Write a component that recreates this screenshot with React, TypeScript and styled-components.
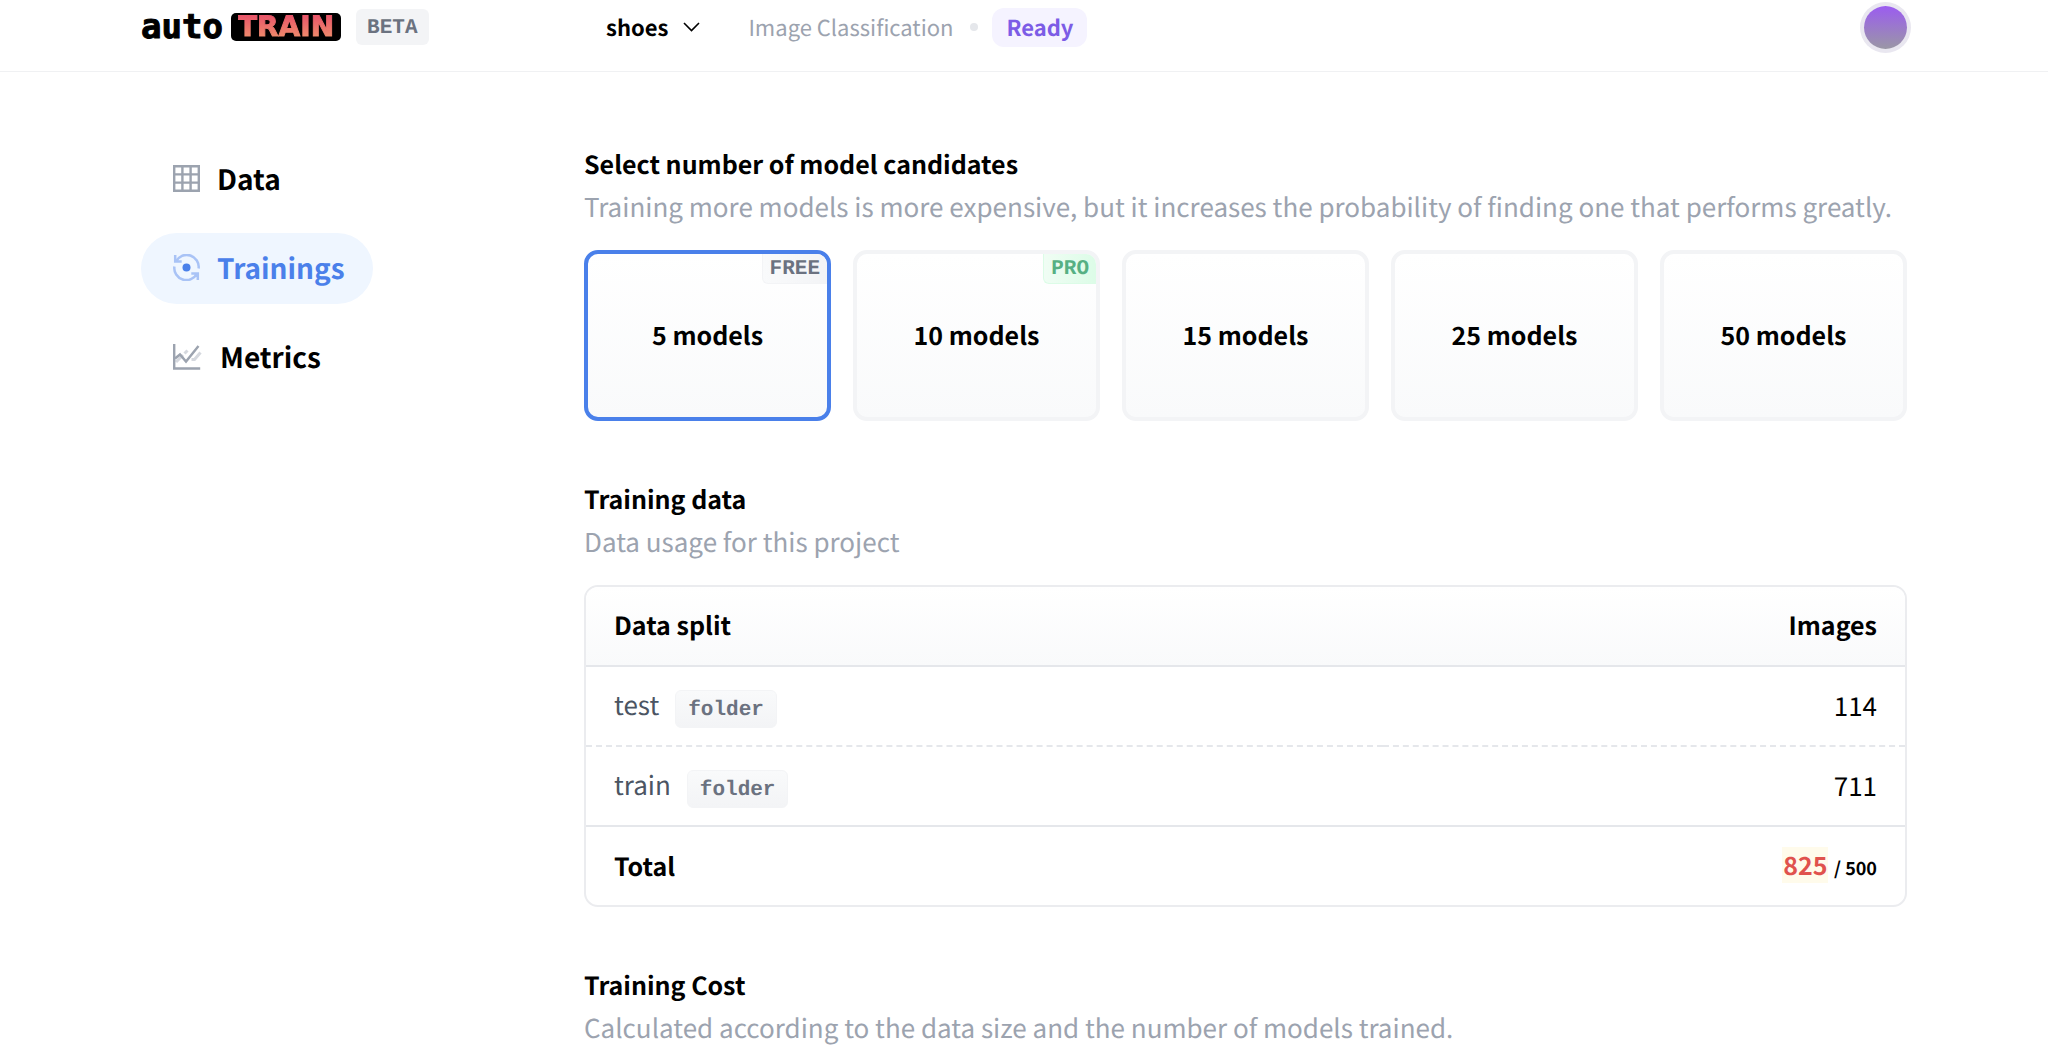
import React, { useState } from "react";
import styled, { createGlobalStyle, css } from "styled-components";

const sans = `"Noto Sans CJK SC", "Open Sans", sans-serif`;
const mono = `"Liberation Mono", monospace`;

const GlobalStyle = createGlobalStyle`
  *, *::before, *::after { box-sizing: border-box; }
  body { margin: 0; background: #fff; color: #000; font-family: ${sans}; font-size: 26px; line-height: 42px; text-rendering: geometricPrecision; }
  h2, p { margin: 0; }
  button { font: inherit; color: inherit; cursor: pointer; text-rendering: inherit; }
  a { color: inherit; text-decoration: none; }
`;

const Container = styled.div`
  display: grid;
  grid-template-columns: minmax(240px, 443px) minmax(0, 1fr);
  max-width: 1766px;
  margin: 0 auto;
`;

const Header = styled.header`
  padding-bottom: 17px;
  border-bottom: 1px solid #f0f1f3;
`;

const Brand = styled.a`
  display: flex;
  align-items: center;
  height: 54px;
`;

const LogoAuto = styled.span`
  font: bold 34px/40px "DejaVu Sans Mono", monospace;
  -webkit-text-stroke: 1px #000;
`;

const LogoTrain = styled.span`
  display: flex;
  margin-left: 8px;
  padding: 0 7px;
  border-radius: 5px;
  background: #000;
`;

const LogoTrainText = styled.span`
  font: bold 28px/28px "DejaVu Sans", sans-serif;
  color: transparent;
  background: linear-gradient(#e8506a, #f0946c);
  background-clip: text;
  -webkit-background-clip: text;
  -webkit-text-stroke: 1px transparent;
`;

const Beta = styled.span`
  margin-left: 15px;
  padding: 3px 11px 0;
  border-radius: 6px;
  background: #f3f4f6;
  color: #6b7280;
  font: bold 21px/33px ${mono};
`;

const ProjectBar = styled.div`
  display: flex;
  align-items: center;
  height: 54px;
  padding-left: 22px;
  font-size: 22px;
`;

const ProjectButton = styled.button`
  display: flex;
  align-items: center;
  gap: 15px;
  padding: 0;
  border: 0;
  background: none;
  font-weight: 600;
`;

const Task = styled.span`
  margin-left: 48px;
  color: #9ca3af;
`;

const Dot = styled.span`
  width: 8px;
  height: 8px;
  margin: 0 14px 0 17px;
  border-radius: 50%;
  background: #e5e7eb;
`;

const Status = styled.span`
  padding: 0 14px;
  border-radius: 12px;
  background: #f5f3ff;
  color: #7c5ce6;
  font-weight: 600;
  line-height: 39px;
`;

const Avatar = styled.button`
  width: 43px;
  height: 43px;
  margin-left: auto;
  padding: 0;
  border: 0;
  border-radius: 50%;
  background: linear-gradient(#9b5cf0, #9a97a5);
  box-shadow: 0 0 0 4px #e9e7f0;
`;

const Sidebar = styled.nav`
  display: flex;
  flex-direction: column;
  align-items: flex-start;
  gap: 18px;
`;

const NavLink = styled.a<{ $active?: boolean }>`
  display: flex;
  align-items: center;
  gap: 17px;
  height: 71px;
  padding: 0 28px 2px 32px;
  border-radius: 36px;
  font-size: 28px;
  font-weight: 600;
  ${(p) => p.$active && css`background: #eff6ff; color: #4a80ea;`}
`;

const Body = styled(Container)`
  padding-top: 72px;
`;

const Main = styled.main`
  display: flex;
  flex-direction: column;
  gap: 58px;
`;

const Title = styled.h2`
  margin-bottom: 2px;
  font-size: 25px;
  font-weight: 600;
  line-height: 40px;
`;

const Description = styled.p`
  margin-bottom: 22px;
  color: #9ca3af;
`;

const Cards = styled.div`
  display: grid;
  grid-template-columns: repeat(auto-fit, minmax(200px, 1fr));
  gap: 22px;
`;

const Card = styled.button<{ $selected: boolean }>`
  position: relative;
  height: 171px;
  padding: 0 0 2px;
  overflow: hidden;
  border: 4px solid ${(p) => (p.$selected ? "#4a80ea" : "#f3f4f6")};
  border-radius: 14px;
  background: linear-gradient(#fff, #f9fafb) padding-box;
  font-size: 25px;
  font-weight: 600;
`;

const Tag = styled.span<{ $pro: boolean }>`
  position: absolute;
  top: 0;
  right: 0;
  padding: 3px 7px 0;
  border: solid ${(p) => (p.$pro ? "#dcfce7" : "#f3f4f6")};
  border-width: 0 0 1px 1px;
  border-bottom-left-radius: 6px;
  background: ${(p) => (p.$pro ? "linear-gradient(90deg, #f0fdf4, #dcfce7)" : "linear-gradient(90deg, #f9fafb, #f3f4f6)")};
  color: ${(p) => (p.$pro ? "#56b083" : "#6b7280")};
  font: bold 21px/26px ${mono};
`;

const Table = styled.table`
  width: 100%;
  border: 2px solid #ebecef;
  border-radius: 14px;
  border-spacing: 0;
  overflow: hidden;
`;

const Row = styled.tr<{ $line?: "solid" | "dashed"; $head?: boolean }>`
  & > * {
    height: 80px;
    padding: 0 28px;
    text-align: left;
    font-weight: 400;
    border-bottom: ${(p) => (p.$line ? `2px ${p.$line} #e5e7eb` : "0")};
    ${(p) => p.$head && css`padding-bottom: 2px; background: linear-gradient(#fff, #f9fafb); font-size: 25px; font-weight: 600;`}
    ${(p) => !p.$line && css`height: 78px; font-size: 25px; font-weight: 600;`}
  }
  & > :last-child { text-align: right; }
`;

const SplitCell = styled.div`
  display: flex;
  align-items: baseline;
  gap: 16px;
  color: #4b5563;
`;

const Folder = styled.code`
  padding: 3px 12px 0;
  border: 1px solid #f3f4f6;
  border-radius: 6px;
  background: linear-gradient(#f9fafb, #f3f4f6);
  color: #6b7280;
  font: bold 21px/33px ${mono};
`;

const Over = styled.mark`
  padding: 0 1px;
  background: #fffbeb;
  color: #e0524d;
`;

const Limit = styled.span`
  font-size: 18px;
`;

const GridIcon = () => (
  <svg width="27" height="27" viewBox="0 0 27 27" fill="none" stroke="#9ca3af" strokeWidth="2.4" aria-hidden="true">
    <path d="M1.200 1.200h24.600v24.600H1.200zM9.400 1v25M17.600 1v25M1 9.400h25M1 17.600h25" />
  </svg>
);

const TrainingIcon = () => (
  <svg width="27" height="27" viewBox="0 0 27 27" fill="none" stroke="#a9c3f6" strokeWidth="2.5" aria-hidden="true">
    <path d="M2.200 1v6.500h6.500M3 7.500A12 12 0 0 1 25.600 14.500M24.800 26v-6.500h-6.500M24 19.500A12 12 0 0 1 1.400 12.500" />
    <circle cx="13.5" cy="13.5" r="4" fill="#4a80ea" stroke="none" />
  </svg>
);

const MetricsIcon = () => (
  <svg width="30" height="27" viewBox="0 0 30 27" fill="none" aria-hidden="true">
    <path d="M3 19l7-7M11.500 10.500l3-3M18.500 16.500h3l6-7" stroke="#d5d8de" strokeWidth="3" />
    <path d="M1.200 1v24.500h26" stroke="#9ca3af" strokeWidth="2.4" />
    <path d="M2 15.500l5-4 6 7L25.500 3" stroke="#9ca3af" strokeWidth="2.4" />
  </svg>
);

const Chevron = () => (
  <svg width="17" height="10" viewBox="0 0 17 10" fill="none" stroke="#000" strokeWidth="1.6" aria-hidden="true">
    <path d="M1 1l7.500 7.500L16 1" />
  </svg>
);

const options = [
  { count: 5, tag: "FREE" },
  { count: 10, tag: "PRO" },
  { count: 15 },
  { count: 25 },
  { count: 50 },
];

const splits = [
  { name: "test", images: 114 },
  { name: "train", images: 711 },
];

export default function App() {
  const [selected, setSelected] = useState(5);
  return (
    <>
      <GlobalStyle />
      <Header>
        <Container>
          <Brand href="#home">
            <LogoAuto>auto</LogoAuto>
            <LogoTrain><LogoTrainText>TRAIN</LogoTrainText></LogoTrain>
            <Beta>BETA</Beta>
          </Brand>
          <ProjectBar>
            <ProjectButton>shoes <Chevron /></ProjectButton>
            <Task>Image Classification</Task>
            <Dot />
            <Status>Ready</Status>
            <Avatar aria-label="Account" />
          </ProjectBar>
        </Container>
      </Header>
      <Body>
        <Sidebar>
          <NavLink href="#data"><GridIcon />Data</NavLink>
          <NavLink href="#trainings" $active aria-current="page"><TrainingIcon />Trainings</NavLink>
          <NavLink href="#metrics"><MetricsIcon />Metrics</NavLink>
        </Sidebar>
        <Main>
          <section>
            <Title>Select number of model candidates</Title>
            <Description>
              Training more models is more expensive, but it increases the probability of finding one that performs greatly.
            </Description>
            <Cards>
              {options.map(({ count, tag }) => (
                <Card
                  key={count}
                  $selected={selected === count}
                  aria-pressed={selected === count}
                  onClick={() => setSelected(count)}
                >
                  {tag && <Tag $pro={tag === "PRO"}>{tag}</Tag>}
                  {count} models
                </Card>
              ))}
            </Cards>
          </section>
          <section>
            <Title>Training data</Title>
            <Description>Data usage for this project</Description>
            <Table>
              <thead>
                <Row $line="solid" $head>
                  <th scope="col">Data split</th>
                  <th scope="col">Images</th>
                </Row>
              </thead>
              <tbody>
                {splits.map(({ name, images }, i) => (
                  <Row key={name} $line={i === splits.length - 1 ? "solid" : "dashed"}>
                    <td><SplitCell>{name}<Folder>folder</Folder></SplitCell></td>
                    <td>{images}</td>
                  </Row>
                ))}
              </tbody>
              <tfoot>
                <Row>
                  <th scope="row">Total</th>
                  <td><Over>825</Over> <Limit>/ 500</Limit></td>
                </Row>
              </tfoot>
            </Table>
          </section>
          <section>
            <Title>Training Cost</Title>
            <Description>Calculated according to the data size and the number of models trained.</Description>
          </section>
        </Main>
      </Body>
    </>
  );
}
